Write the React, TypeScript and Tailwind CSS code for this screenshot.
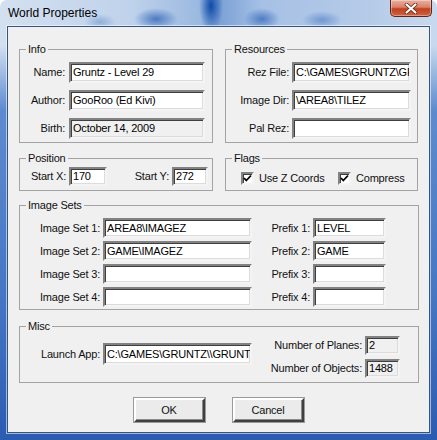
import React from "react";

const fieldBase =
  "flex items-center overflow-hidden whitespace-nowrap border-2 border-t-[#828282] border-l-[#828282] border-r-[#f4f4f4] border-b-[#f4f4f4] shadow-[inset_1px_1px_0_#3f3f3f,inset_-1px_-1px_0_#dcdcdc] pl-[2px] text-black";

function Field({ cls, value, disabled }: { cls: string; value?: string; disabled?: boolean }) {
  return (
    <div className={`${fieldBase} ${disabled ? "bg-[#f0f0f0]" : "bg-white"} ${cls}`}>
      <span className="leading-[13px]">{value ?? ""}</span>
    </div>
  );
}

function Group({ title, cls, children }: { title: string; cls: string; children: React.ReactNode }) {
  return (
    <fieldset className={`border border-[#a3a3a3] ${cls}`}>
      <legend className="ml-[6px] px-[2px] leading-[13px] h-[13px]">{title}</legend>
      {children}
    </fieldset>
  );
}

function Check({ label }: { label: string }) {
  return (
    <div className="flex items-center gap-[5px] h-[13px]">
      <div className="w-[13px] h-[13px] bg-white border-2 border-t-[#828282] border-l-[#828282] border-r-[#f4f4f4] border-b-[#f4f4f4] shadow-[inset_1px_1px_0_#3f3f3f] flex items-center justify-center">
        <svg width="9" height="9" viewBox="0 0 9 9">
          <path d="M1 4 L3.3 6.5 L8 1.5" stroke="#000" strokeWidth="1.8" fill="none" />
        </svg>
      </div>
      <span className="leading-[13px]">{label}</span>
    </div>
  );
}

function Button({ label }: { label: string }) {
  return (
    <div className="w-[71px] h-[24px] flex items-center justify-center bg-[#ebebeb] border-2 border-t-white border-l-white border-r-[#404040] border-b-[#404040] shadow-[inset_-1px_-1px_0_#8a8a8a,0_0_0_1px_#9a9a9a]">
      <span className="leading-[13px]">{label}</span>
    </div>
  );
}

export default function App() {
  return (
    <div className="w-[437px] h-[440px] bg-white">
      <div className="w-[437px] h-[440px] rounded-t-[7px] flex flex-col text-[11px] tracking-[-0.2px] text-[#111] font-['Liberation_Sans',Arial,sans-serif] bg-[radial-gradient(ellipse_12px_26px_at_211px_6px,#0d4aa8,transparent),radial-gradient(ellipse_22px_11px_at_156px_19px,rgba(40,95,180,0.75),transparent),radial-gradient(ellipse_18px_11px_at_262px_19px,rgba(40,95,180,0.7),transparent),radial-gradient(ellipse_20px_9px_at_322px_20px,rgba(70,120,195,0.6),transparent),radial-gradient(ellipse_16px_8px_at_100px_22px,rgba(90,135,200,0.5),transparent),linear-gradient(180deg,rgba(0,0,0,0)_0px,rgba(0,0,0,0)_45px,#5e8bd0_110px,#4476c4_300px,#2b5cb2_100%),linear-gradient(90deg,#d3e0f0_0%,#bfd2eb_30%,#9ab8e0_46%,#7aa0d6_50%,#a6c1e5_60%,#b6cbe8_85%,#c9daef_100%)]">
        <div className="h-[26px] shrink-0 flex items-start justify-between pl-[8px] pr-[5px]">
          <span className="mt-[7px] text-[12px] leading-[13px] tracking-normal text-black">World Properties</span>
          <div className="w-[42px] h-[17px] rounded-b-[5px] border border-t-0 border-[#5e2418] bg-[linear-gradient(180deg,#eab1a2_0%,#d98169_45%,#c0401f_55%,#cf6444_100%)] shadow-[inset_0_0_0_1px_rgba(255,255,255,0.35)] flex items-center justify-center">
            <svg width="14" height="11" viewBox="0 0 14 11">
              <path d="M2.5 1.5 L11.5 9.5 M11.5 1.5 L2.5 9.5" stroke="#5a1f12" strokeWidth="3.6" strokeLinecap="round" />
              <path d="M2.5 1.5 L11.5 9.5 M11.5 1.5 L2.5 9.5" stroke="#ffffff" strokeWidth="2.2" strokeLinecap="round" />
            </svg>
          </div>
        </div>
        <div className="mx-[7px] mb-[7px] flex-1 border border-[#35547f] shadow-[0_0_0_1px_rgba(255,255,255,0.55)] bg-[#f0f0f0] flex flex-col pl-[11px]">
          <div className="flex gap-[12px] mt-[16px]">
            <Group title="Info" cls="w-[194px] pt-[6px] pb-[3px]">
              <div className="flex flex-col gap-[7px]">
                <div className="flex items-center gap-[4px]">
                  <span className="w-[45px] text-right">Name:</span>
                  <Field cls="w-[136px] h-[21px]" value="Gruntz - Level 29" />
                </div>
                <div className="flex items-center gap-[4px]">
                  <span className="w-[45px] text-right">Author:</span>
                  <Field cls="w-[136px] h-[21px]" value="GooRoo (Ed Kivi)" />
                </div>
                <div className="flex items-center gap-[4px]">
                  <span className="w-[45px] text-right">Birth:</span>
                  <Field cls="w-[136px] h-[21px]" value="October 14, 2009" disabled />
                </div>
              </div>
            </Group>
            <Group title="Resources" cls="w-[193px] pt-[6px] pb-[3px]">
              <div className="flex flex-col gap-[7px]">
                <div className="flex items-center gap-[3px]">
                  <span className="w-[63px] text-right">Rez File:</span>
                  <Field cls="w-[119px] h-[21px]" value={"C:\\GAMES\\GRUNTZ\\GRUNTZ.REZ"} />
                </div>
                <div className="flex items-center gap-[3px]">
                  <span className="w-[63px] text-right">Image Dir:</span>
                  <Field cls="w-[119px] h-[21px]" value={"\\AREA8\\TILEZ"} />
                </div>
                <div className="flex items-center gap-[3px]">
                  <span className="w-[63px] text-right">Pal Rez:</span>
                  <Field cls="w-[119px] h-[21px]" />
                </div>
              </div>
            </Group>
          </div>

          <div className="flex gap-[12px] mt-[9px]">
            <Group title="Position" cls="w-[194px] pt-[2px] pb-[4px]">
              <div className="flex items-center gap-[3px]">
                <span className="w-[46px] text-right">Start X:</span>
                <Field cls="w-[38px] h-[19px]" value="170" />
                <span className="w-[59px] text-right">Start Y:</span>
                <Field cls="w-[36px] h-[19px]" value="272" />
              </div>
            </Group>
            <Group title="Flags" cls="w-[193px] pt-[7px] pb-[5px]">
              <div className="flex items-center pl-[15px]">
                <div className="w-[97px]">
                  <Check label="Use Z Coords" />
                </div>
                <Check label="Compress" />
              </div>
            </Group>
          </div>

          <Group title="Image Sets" cls="w-[400px] mt-[8px] pt-[6px] pb-[2px]">
            <div className="flex flex-col gap-[3px]">
              {[
                ["Image Set 1:", "AREA8\\IMAGEZ", "Prefix 1:", "LEVEL"],
                ["Image Set 2:", "GAME\\IMAGEZ", "Prefix 2:", "GAME"],
                ["Image Set 3:", "", "Prefix 3:", ""],
                ["Image Set 4:", "", "Prefix 4:", ""],
              ].map((r) => (
                <div key={r[0]} className="flex items-center gap-[3px]">
                  <span className="w-[80px] text-right">{r[0]}</span>
                  <Field cls="w-[149px] h-[20px]" value={r[1]} />
                  <span className="w-[55px] text-right">{r[2]}</span>
                  <Field cls="w-[73px] h-[20px]" value={r[3]} />
                </div>
              ))}
            </div>
          </Group>

          <Group title="Misc" cls="w-[400px] mt-[10px] pb-[4px]">
            <div className="flex items-start">
              <div className="flex items-center gap-[3px] mt-[10px]">
                <span className="w-[80px] text-right">Launch App:</span>
                <Field cls="w-[149px] h-[22px]" value={"C:\\GAMES\\GRUNTZ\\\\GRUNTZ.EXE"} />
              </div>
              <div className="flex flex-col gap-[4px] pt-[3px]">
                <div className="flex items-center gap-[3px]">
                  <span className="w-[110px] text-right">Number of Planes:</span>
                  <Field cls="w-[35px] h-[19px]" value="2" disabled />
                </div>
                <div className="flex items-center gap-[3px]">
                  <span className="w-[110px] text-right">Number of Objects:</span>
                  <Field cls="w-[35px] h-[19px]" value="1488" disabled />
                </div>
              </div>
            </div>
          </Group>

          <div className="flex justify-center gap-[28px] mt-[15px] pr-[11px]">
            <Button label="OK" />
            <Button label="Cancel" />
          </div>
        </div>
      </div>
    </div>
  );
}
